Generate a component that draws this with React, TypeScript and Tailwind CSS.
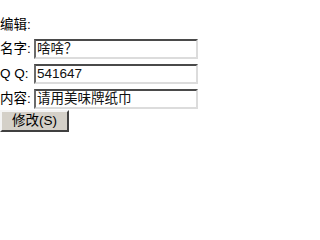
import React from "react"

const font = { fontFamily: '"Liberation Sans", "Noto Sans CJK SC", sans-serif' }

function Field({ label, value, last = false }: { label: string; value: string; last?: boolean }) {
  return (
    <div className={`flex items-start ${last ? "h-[21px]" : "h-[25px]"}`}>
      <div className="w-[34px] h-[20px] mt-[1px] flex items-center whitespace-nowrap">{label}</div>
      <input
        readOnly
        value={value}
        style={font}
        className="mt-[1px] w-[164px] h-[20px] px-[1px] text-[13.5px] text-[#111] bg-white border-2 border-t-[#4a4a4a] border-l-[#6a6a6a] border-r-[#dcdcdc] border-b-[#dcdcdc] outline-none"
      />
    </div>
  )
}

export default function App() {
  return (
    <div style={font} className="w-[241px] h-[222px] bg-white text-black text-[13.5px] pt-[12px]">
      <div className="h-[26px] flex items-center">编辑:</div>
      <Field label="名字:" value="啥啥？" />
      <Field label="Q Q:" value="541647" />
      <Field label="内容:" value="请用美味牌纸巾" last />
      <button
        style={font}
        className="mt-[1px] w-[69px] h-[22px] text-[13.5px] text-black bg-[#d4d0c8] border-2 border-t-[#f4f4f4] border-l-[#f4f4f4] border-r-[#404040] border-b-[#404040] flex items-center justify-center"
      >
        修改(S)
      </button>
    </div>
  )
}
